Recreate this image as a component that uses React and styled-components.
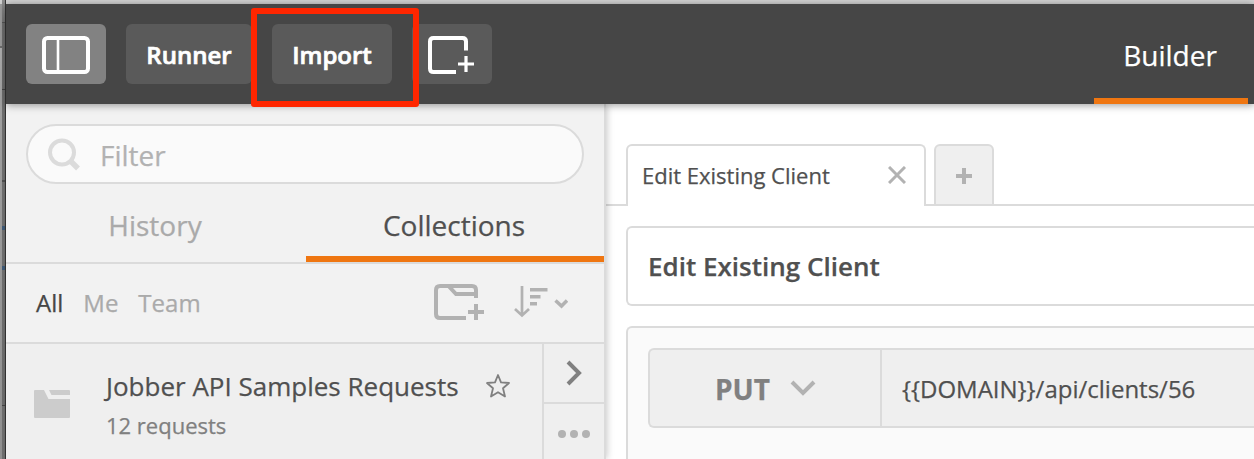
import React from "react";
import styled, { createGlobalStyle } from "styled-components";

const GlobalStyle = createGlobalStyle`
  * { box-sizing: border-box; }
  body {
    margin: 0;
    overflow: hidden;
    background: #fff;
    font-family: "Open Sans", "Noto Sans", sans-serif;
    color: #505050;
    -webkit-text-stroke: 0.25px currentColor;
  }
`;

const Screen = styled.div`
  display: flex;
  width: 1254px;
  height: 459px;
  overflow: hidden;
`;

const DesktopEdge = styled.div`
  display: flex;
  flex: none;
  width: 6px;
`;

const EdgeLight = styled.div`
  width: 2px;
  background: linear-gradient(#d0d0d0 4px, #9c9c9c 4px, #9c9c9c 46px, #6e6e6e 46px, #6e6e6e 48px, #b0b0b0 48px, #a0a0a0 120px, #919191 459px);
`;

const EdgeMid = styled.div`
  width: 3px;
  background: linear-gradient(
    #8c8c8c 0, #777 22px, #555 22px, #555 23px, #707070 23px, #6c6c6c 89px,
    #444 89px, #444 90px, #707070 90px, #707070 180px, #505050 180px, #505050 182px,
    #707070 182px, #707070 226px, #3f5b78 226px, #3f5b78 230px, #707070 230px,
    #707070 266px, #3f5b78 266px, #3f5b78 270px, #707070 270px, #6c6c6c 405px,
    #444 405px, #444 406px, #707070 406px
  );
`;

const EdgeDark = styled.div`
  width: 1px;
  background: #363636;
`;

const Window = styled.div`
  display: flex;
  flex-direction: column;
  flex: 1;
  min-width: 0;
`;

const TitleStrip = styled.div`
  flex: none;
  height: 4px;
  background: #d5d5d5;
`;

const Header = styled.header`
  position: relative;
  z-index: 2;
  display: flex;
  flex: none;
  justify-content: space-between;
  height: 100px;
  padding: 0 6px 0 20px;
  background: #464646;
  box-shadow: 0 1px 8px rgba(0, 0, 0, 0.42);
`;

const Toolbar = styled.div`
  display: flex;
  align-items: center;
  gap: 20px;
`;

const ToolButton = styled.button`
  display: flex;
  align-items: center;
  justify-content: center;
  width: ${(p) => p.$width}px;
  height: 60px;
  padding: 2px 0 0;
  border: 0;
  border-radius: 6px;
  background: ${(p) => (p.$active ? "#828282" : "#5a5a5a")};
  color: #fff;
  font: 600 24px/58px "Open Sans", sans-serif;
  -webkit-text-stroke: 0.7px #fff;
`;

const Highlighted = styled.div`
  position: relative;
  display: flex;

  &::after {
    content: "";
    position: absolute;
    top: -16px;
    right: -27px;
    bottom: -23px;
    left: -21px;
    border: 6px solid #ff2600;
    border-radius: 3px;
  }
`;

const ModeTab = styled.div`
  width: 154px;
  height: 100px;
  padding-right: 2px;
  border-bottom: 6px solid #ef7611;
  color: #fff;
  font-size: 28px;
  line-height: 102px;
  text-align: center;
`;

const Body = styled.div`
  display: flex;
  flex: 1;
  min-height: 0;
`;

const Sidebar = styled.aside`
  position: relative;
  z-index: 1;
  flex: none;
  width: 600px;
  border-right: 2px solid #dbdbdb;
  background: #f2f2f2;
  box-shadow: 1px 0 7px rgba(0, 0, 0, 0.22);
`;

const SearchBox = styled.div`
  display: flex;
  align-items: center;
  gap: 20px;
  height: 60px;
  margin: 20px 20px 0;
  padding: 0 20px;
  border: 2px solid #dbdbdb;
  border-radius: 30px;
  background: #fafafa;
  color: #b2b2b2;
  font-size: 28px;
`;

const SearchText = styled.span`
  padding-top: 2px;
  line-height: 54px;
`;

const SideTabs = styled.nav`
  display: flex;
  height: 80px;
  border-bottom: 2px solid #dbdbdb;
`;

const SideTab = styled.div`
  width: ${(p) => p.$width}px;
  padding-right: 2px;
  border-bottom: 6px solid ${(p) => (p.$active ? "#ef7611" : "transparent")};
  color: ${(p) => (p.$active ? "#505050" : "#aaa")};
  font-size: 28px;
  line-height: 82px;
  text-align: center;
`;

const FilterBar = styled.div`
  display: flex;
  align-items: center;
  justify-content: space-between;
  height: 80px;
  padding: 0 36px 0 30px;
  border-bottom: 2px solid #dbdbdb;
`;

const Scopes = styled.div`
  display: flex;
  gap: 20px;
`;

const Scope = styled.span`
  color: ${(p) => (p.$active ? "#464646" : "#aaa")};
  font-size: 24px;
  line-height: 78px;
`;

const FilterActions = styled.div`
  display: flex;
  gap: 30px;
  padding-bottom: 2px;
`;

const CollectionRow = styled.div`
  display: flex;
  height: 120px;
  background: #efefef;
`;

const FolderCell = styled.div`
  flex: none;
  width: 100px;
  padding: 46px 0 0 28px;
`;

const CollectionText = styled.div`
  flex: 1;
  padding-top: 23px;
`;

const CollectionTitle = styled.div`
  display: flex;
  align-items: center;
  gap: 26px;
  height: 38px;
  font-size: 26px;
  line-height: 38px;
  white-space: nowrap;
`;

const CollectionMeta = styled.div`
  padding-top: 5px;
  color: #808080;
  font-size: 22px;
  line-height: 30px;
`;

const RowActions = styled.div`
  display: flex;
  flex-direction: column;
  flex: none;
  width: 62px;
  border-left: 2px solid #dbdbdb;
`;

const RowAction = styled.div`
  display: flex;
  align-items: center;
  justify-content: center;
  height: 60px;
  padding-top: ${(p) => p.$drop || 0}px;
  border-bottom: 2px solid #dbdbdb;
`;

const Main = styled.main`
  flex: 1;
  min-width: 0;
  padding-top: 40px;
`;

const RequestTabs = styled.div`
  display: flex;
  height: 62px;
`;

const TabLine = styled.div`
  flex: ${(p) => (p.$width ? "none" : 1)};
  width: ${(p) => p.$width || 0}px;
  border-bottom: 2px solid #dbdbdb;
`;

const RequestTab = styled.div`
  display: flex;
  align-items: center;
  justify-content: space-between;
  width: 300px;
  padding: 0 18px 2px 14px;
  border: 2px solid #dbdbdb;
  border-bottom: 0;
  border-radius: 6px 6px 0 0;
  font-size: 22px;
  line-height: 58px;
`;

const NewTab = styled.div`
  display: flex;
  align-items: center;
  justify-content: center;
  width: 60px;
  padding-top: 2px;
  border: 2px solid #dbdbdb;
  border-radius: 6px 6px 0 0;
  background: #efefef;
`;

const NamePanel = styled.div`
  height: 80px;
  margin: 20px 0 0 20px;
  padding-left: 20px;
  border: 2px solid #dbdbdb;
  border-right: 0;
  border-radius: 6px 0 0 6px;
  font-size: 26px;
  font-weight: 600;
  line-height: 76px;
`;

const RequestPanel = styled.div`
  height: 200px;
  margin: 20px 0 0 20px;
  padding: 20px 0 0 20px;
  border: 2px solid #dbdbdb;
  border-right: 0;
  border-radius: 6px 0 0 0;
  background: #fafafa;
`;

const UrlBar = styled.div`
  display: flex;
  height: 80px;
  border: 2px solid #dbdbdb;
  border-right: 0;
  border-radius: 6px 0 0 6px;
  background: #efefef;
`;

const Method = styled.div`
  display: flex;
  align-items: center;
  gap: 20px;
  width: 232px;
  padding-left: 65px;
  border-right: 2px solid #dbdbdb;
  color: #808080;
  font-size: 28px;
  font-weight: 700;
`;

const MethodName = styled.span`
  padding-top: 2px;
  line-height: 74px;
`;

const Url = styled.div`
  padding-left: 20px;
  font-size: 24px;
  line-height: 77px;
`;

const Svg = ({ w, h, stroke = "#b2b2b2", sw = 4, children }) => (
  <svg width={w} height={h} viewBox={`0 0 ${w} ${h}`} fill="none" stroke={stroke} strokeWidth={sw}>
    {children}
  </svg>
);

const PanelIcon = () => (
  <Svg w={48} h={38} stroke="#fff">
    <rect x="2" y="2" width="44" height="34" rx="3.5" />
    <path d="M16 3V35" strokeWidth="2.6" />
  </Svg>
);

const NewWindowIcon = () => (
  <Svg w={48} h={38} stroke="#fff">
    <path d="M38 14.500V5.500Q38 2 34.500 2H5.500Q2 2 2 5.500V32.500Q2 36 5.500 36H28" />
    <path d="M30 28H46M38 20V36" strokeWidth="3.2" />
  </Svg>
);

const SearchIcon = () => (
  <Svg w={32} h={34} stroke="#dbdbdb">
    <circle cx="14" cy="15.5" r="12" />
    <path d="M22 23.500L30 31.500" strokeWidth="5.500" />
  </Svg>
);

const AddFolderIcon = () => (
  <Svg w={50} h={36}>
    <path d="M42 14V6Q42 2 38 2H6Q2 2 2 6V30Q2 34 6 34H32" />
    <path d="M15 2.500L22 10H42M42 20V36M34 28H50" />
  </Svg>
);

const SortIcon = () => (
  <Svg w={54} h={36}>
    <path d="M8 2V31M1 25L8 31.500L15 25" strokeWidth="2.700" />
    <path d="M16 5.700H33.500M16 12.700H26.500M16 19.700H23" strokeWidth="3.500" />
    <path d="M41.500 16.500L47.500 22L53 16.500" strokeWidth="3.500" />
  </Svg>
);

const FolderIcon = () => (
  <svg width="36" height="28" viewBox="0 0 36 28" fill="#ccc">
    <path d="M1 0H10L14.500 9H36V27Q36 28 35 28H1Q0 28 0 27V1Q0 0 1 0Z" />
    <path d="M15 0H35Q36 0 36 1V5H17.500Z" />
  </svg>
);

const StarIcon = () => (
  <Svg w={26} h={26} stroke="#808080" sw={1.8}>
    <path d="M13 2L16 9.300L24 10L18 15.200L20 23.500L13 19.200L6 23.500L8 15.200L2 10L10 9.300Z" strokeLinejoin="round" />
  </Svg>
);

const ChevronRight = () => (
  <Svg w={16} h={26} stroke="#808080">
    <path d="M2 2L13 13L2 24" />
  </Svg>
);

const Dots = () => (
  <svg width="32" height="8" viewBox="0 0 32 8" fill="#b2b2b2">
    <circle cx="4" cy="4" r="4" />
    <circle cx="16" cy="4" r="4" />
    <circle cx="28" cy="4" r="4" />
  </svg>
);

const CloseIcon = () => (
  <Svg w={18} h={18} sw={3}>
    <path d="M1 1L17 17M17 1L1 17" />
  </Svg>
);

const PlusIcon = () => (
  <Svg w={16} h={16}>
    <path d="M8 0V16M0 8H16" />
  </Svg>
);

const ChevronDown = () => (
  <Svg w={26} h={16}>
    <path d="M2 2L13 13L24 2" />
  </Svg>
);

export default function App() {
  return (
    <Screen>
      <GlobalStyle />
      <DesktopEdge>
        <EdgeLight />
        <EdgeMid />
        <EdgeDark />
      </DesktopEdge>
      <Window>
        <TitleStrip />
        <Header>
          <Toolbar>
            <ToolButton $width={80} $active><PanelIcon /></ToolButton>
            <ToolButton $width={126}>Runner</ToolButton>
            <Highlighted>
              <ToolButton $width={120}>Import</ToolButton>
            </Highlighted>
            <ToolButton $width={80}><NewWindowIcon /></ToolButton>
          </Toolbar>
          <ModeTab>Builder</ModeTab>
        </Header>
        <Body>
          <Sidebar>
            <SearchBox><SearchIcon /><SearchText>Filter</SearchText></SearchBox>
            <SideTabs>
              <SideTab $width={300}>History</SideTab>
              <SideTab $width={298} $active>Collections</SideTab>
            </SideTabs>
            <FilterBar>
              <Scopes>
                <Scope $active>All</Scope>
                <Scope>Me</Scope>
                <Scope>Team</Scope>
              </Scopes>
              <FilterActions>
                <AddFolderIcon />
                <SortIcon />
              </FilterActions>
            </FilterBar>
            <CollectionRow>
              <FolderCell><FolderIcon /></FolderCell>
              <CollectionText>
                <CollectionTitle>Jobber API Samples Requests<StarIcon /></CollectionTitle>
                <CollectionMeta>12 requests</CollectionMeta>
              </CollectionText>
              <RowActions>
                <RowAction><ChevronRight /></RowAction>
                <RowAction $drop={2}><Dots /></RowAction>
              </RowActions>
            </CollectionRow>
          </Sidebar>
          <Main>
            <RequestTabs>
              <TabLine $width={20} />
              <RequestTab>Edit Existing Client<CloseIcon /></RequestTab>
              <TabLine $width={8} />
              <NewTab><PlusIcon /></NewTab>
              <TabLine />
            </RequestTabs>
            <NamePanel>Edit Existing Client</NamePanel>
            <RequestPanel>
              <UrlBar>
                <Method><MethodName>PUT</MethodName><ChevronDown /></Method>
                <Url>{"{{DOMAIN}}/api/clients/56"}</Url>
              </UrlBar>
            </RequestPanel>
          </Main>
        </Body>
      </Window>
    </Screen>
  );
}
